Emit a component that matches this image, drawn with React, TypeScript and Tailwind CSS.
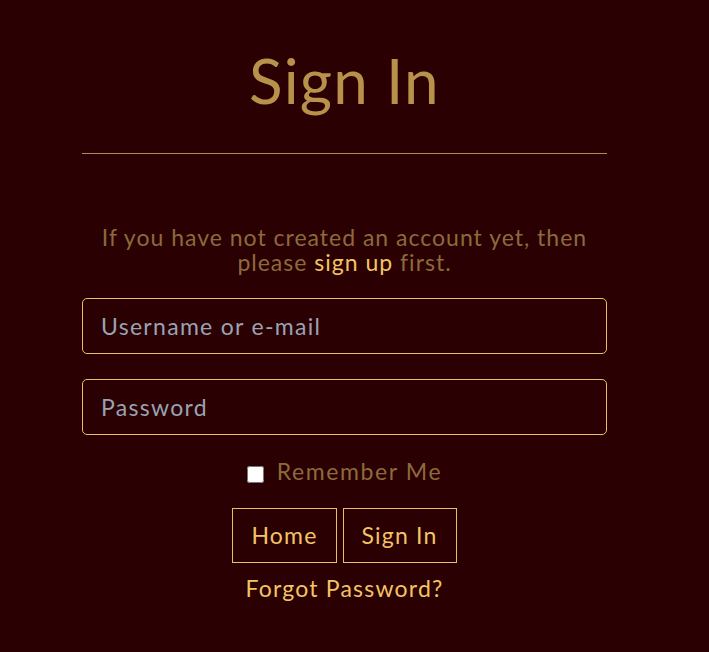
import React from 'react'

export default function App() {
  return (
    <div className="min-h-[652px] w-full bg-[#2a0003] font-['Lato','Open_Sans',sans-serif]">
      <div className="flex justify-center pr-[20px]">
        <div className="w-[525px] flex flex-col items-center">
          {/* Title */}
          <h1 className="mt-[42px] text-[62px] leading-[76px] tracking-[1.2px] text-[#b8914a] font-normal">Sign In</h1>
          <hr className="mt-[35px] w-full border-0 border-t border-[#b08a50]" />

          {/* Notice */}
          <p className="mt-[71px] text-center text-[23px] leading-[25px] tracking-[1px] text-[#8d6a3b] px-[8px]">
            If you have not created an account yet, then please{' '}
            <a href="#" className="text-[#f2c463]">sign up</a> first.
          </p>

          {/* Form */}
          <form className="w-full mt-[23px] flex flex-col items-center" onSubmit={e => e.preventDefault()}>
            <input
              type="text"
              placeholder="Username or e-mail"
              className="w-full h-[56px] px-[18px] rounded-[5px] border border-[#e8c060] bg-transparent text-[23px] tracking-[1.3px] text-[#e8e0d0] placeholder:text-[#9aa3b2] outline-none"
            />
            <input
              type="password"
              placeholder="Password"
              className="mt-[25px] w-full h-[56px] px-[18px] rounded-[5px] border border-[#e8c060] bg-transparent text-[23px] tracking-[1.3px] text-[#e8e0d0] placeholder:text-[#9aa3b2] outline-none"
            />

            <label className="mt-[21px] flex items-center gap-[13px] text-[23px] leading-[30px] tracking-[1.6px] text-[#8d6a3b]">
              <input type="checkbox" className="w-[17px] h-[17px] mt-[6px]" />
              Remember Me
            </label>

            <div className="mt-[22px] flex gap-[6px]">
              <button type="button" className="h-[55px] px-[18px] border border-[#e8c060] text-[23px] tracking-[1.2px] text-[#f2c463]">Home</button>
              <button type="submit" className="h-[55px] px-[18px] border border-[#e8c060] text-[23px] tracking-[1.2px] text-[#f2c463]">Sign In</button>
            </div>

            <a href="#" className="mt-[10px] text-[23px] leading-[30px] tracking-[1.2px] text-[#f2c463]">Forgot Password?</a>
          </form>
        </div>
      </div>
    </div>
  )
}
